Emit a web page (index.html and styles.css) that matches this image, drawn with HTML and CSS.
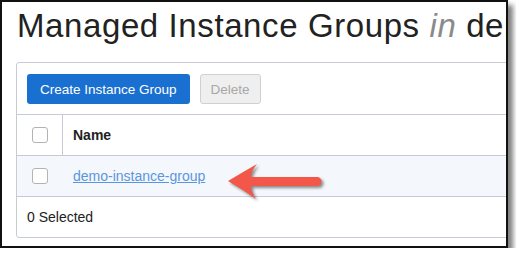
FILE: index.html
```html
<!DOCTYPE html>
<html lang="en">
<head>
    <meta charset="UTF-8">
    <title>Managed Instance Groups</title>
    <link rel="stylesheet" href="styles.css">
</head>
<body>

    <div class="frame">
        <h1 class="page-title">Managed Instance Groups <em>in</em> demo</h1>

        <div class="panel">
            <div class="toolbar">
                <button class="btn btn-primary">Create Instance Group</button>
                <button class="btn btn-disabled" disabled>Delete</button>
            </div>

            <div class="grid-row grid-head">
                <div class="cell cell-check"><span class="checkbox"></span></div>
                <div class="cell cell-name">Name</div>
            </div>

            <div class="grid-row grid-item">
                <div class="cell cell-check"><span class="checkbox"></span></div>
                <div class="cell cell-name"><a href="#" class="item-link">demo-instance-group</a></div>
            </div>

            <div class="panel-footer">0 Selected</div>
        </div>

        <!-- annotation arrow -->
        <svg class="callout" width="110" height="50" viewBox="0 0 110 50">
            <path d="M8,23 Q23,14 37,6 Q31,13 31,19 L97,19 A4.5,4.5 0 0 1 97,28 L31,28 Q31,34 36,41 Q22,31 8,23 Z" fill="#f2574a"/>
        </svg>
    </div>

</body>
</html>
```

FILE: styles.css
```css
/* base */
body {
    margin: 0;
    background-color: #fff;
    font-family: 'Liberation Sans', Arial, sans-serif;
    color: #222;
}

.frame {
    position: relative;
    width: 504px;
    height: 244px;
    border: 2px solid #111;
    background-color: #fff;
    box-shadow: 5px 5px 5px rgba(0, 0, 0, 0.5);
    overflow: hidden;
}

.page-title {
    margin: 5px 0 17px 15px;
    font-size: 33px;
    font-weight: 400;
    line-height: 38px;
    letter-spacing: 0.6px;
    white-space: nowrap;
    color: #222;
}

.page-title em {
    color: #8a8a8a;
}

/* panel */
.panel {
    margin-left: 14px;
    width: 560px;
    border: 1px solid #c7ccd4;
    border-radius: 3px;
}

.toolbar {
    display: flex;
    gap: 10px;
    padding: 11px 10px 10px;
    border-bottom: 1px solid #c7ccd4;
}

.btn {
    height: 30px;
    padding: 0 10px;
    border-radius: 3px;
    font-family: inherit;
    font-size: 13.5px;
}

.btn-primary {
    padding: 0 13px;
    border: none;
    background-color: #1a70d0;
    color: #fff;
}

.btn-disabled {
    border: 1px solid #d0d0d0;
    background-color: #efefef;
    color: #a8a8a8;
}

.grid-row {
    display: grid;
    grid-template-columns: 46px 1fr;
    height: 40px;
    border-bottom: 1px solid #c7ccd4;
}

.cell {
    display: flex;
    align-items: center;
}

.cell-check {
    padding-left: 15px;
}

.cell-name {
    padding-left: 10px;
    font-size: 14px;
}

.grid-head .cell-check {
    border-right: 1px solid #c7ccd4;
}

.grid-head .cell-name {
    font-weight: 700;
}

.grid-item {
    background-color: #f4f7fb;
}

.checkbox {
    width: 14px;
    height: 14px;
    border: 1px solid #b3b3b3;
    border-radius: 3px;
    background-color: #fff;
}

.item-link {
    color: #5a96e0;
    text-decoration: underline;
}

.panel-footer {
    display: flex;
    align-items: center;
    height: 40px;
    padding-left: 10px;
    font-size: 14px;
}

/* arrow over the row */
.callout {
    position: absolute;
    left: 218px;
    top: 156px;
    filter: drop-shadow(2px 2px 1.5px rgba(0, 0, 0, 0.45));
}
```
